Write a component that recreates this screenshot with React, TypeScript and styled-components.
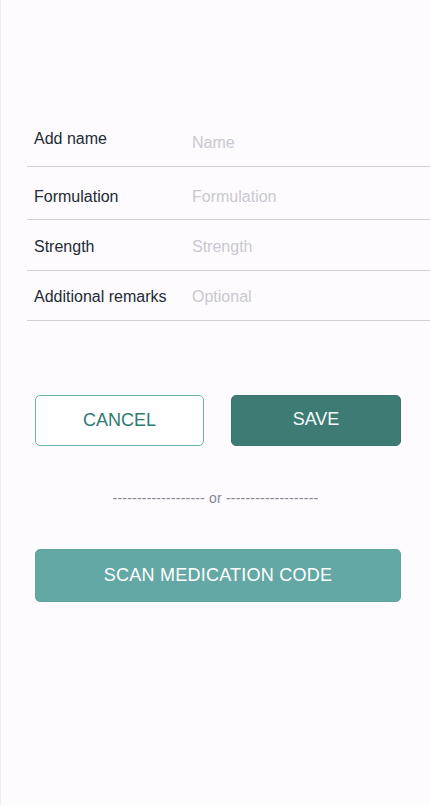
import styled, { createGlobalStyle } from "styled-components";

const GlobalStyle = createGlobalStyle`
  html, body {
    margin: 0;
    padding: 0;
    background: #fdfbfd;
  }
  body {
    font-family: "Liberation Sans", Arial, sans-serif;
  }
`;

// shift = vertical nudge of the whole row content, inputShift = extra nudge for the input
const fields = [
  { label: "Add name", placeholder: "Name", height: 54, shift: -1, inputShift: 4 },
  { label: "Formulation", placeholder: "Formulation", height: 53, shift: 4, inputShift: 0 },
  { label: "Strength", placeholder: "Strength", height: 51, shift: 2, inputShift: 0 },
  { label: "Additional remarks", placeholder: "Optional", height: 50, shift: 1, inputShift: 0 },
];

const AddMedication = () => {
  return (
    <Screen>
      <GlobalStyle />
      <Form>
        {fields.map((f) => (
          <FieldRow key={f.label} $height={f.height} $shift={f.shift}>
            <Label>{f.label}</Label>
            <Input placeholder={f.placeholder} $shift={f.inputShift} />
          </FieldRow>
        ))}
      </Form>

      <ButtonRow>
        <OutlineButton>CANCEL</OutlineButton>
        <SolidButton>SAVE</SolidButton>
      </ButtonRow>

      <Divider>------------------- or -------------------</Divider>

      <ScanButton>SCAN MEDICATION CODE</ScanButton>
    </Screen>
  );
};

export default AddMedication;

const Screen = styled.div`
  box-sizing: border-box;
  width: 430px;
  min-height: 805px;
  border-left: 1px solid #ececef;
  background: #fdfbfd;
  padding-top: 113px;
  display: flex;
  flex-direction: column;
`;

const Form = styled.div`
  margin-left: 26px;
  display: flex;
  flex-direction: column;
`;

const FieldRow = styled.label<{ $height: number; $shift: number }>`
  box-sizing: border-box;
  height: ${(p) => p.$height}px;
  border-bottom: 1px solid #cfcfd8;
  display: flex;
  align-items: center;
  padding-left: 7px;
  padding-top: ${(p) => Math.max(p.$shift, 0) * 2}px;
  padding-bottom: ${(p) => Math.max(-p.$shift, 0) * 2}px;
`;

const Label = styled.span`
  width: 158px;
  flex-shrink: 0;
  font-size: 16px;
  color: #232a36;
`;

const Input = styled.input<{ $shift: number }>`
  flex: 1;
  min-width: 0;
  border: none;
  outline: none;
  background: transparent;
  padding: 0;
  margin-top: ${(p) => p.$shift * 2}px;
  font-family: "Liberation Sans", Arial, sans-serif;
  font-size: 16px;
  color: #232a36;

  &::placeholder {
    color: #c9c8d2;
  }
`;

const ButtonRow = styled.div`
  margin: 74px 30px 0 34px;
  display: grid;
  grid-template-columns: 169px 170px;
  column-gap: 27px;
`;

const BaseButton = styled.button`
  box-sizing: border-box;
  height: 51px;
  border-radius: 5px;
  font-family: "Liberation Sans", Arial, sans-serif;
  font-size: 18px;
  cursor: pointer;
`;

const OutlineButton = styled(BaseButton)`
  background: #ffffff;
  border: 1px solid #66b2af;
  color: #2e7a72;
`;

const SolidButton = styled(BaseButton)`
  background: #3d7b74;
  border: 1px solid #3a766f;
  color: #f4fbfa;
  padding-bottom: 3px;
`;

const Divider = styled.div`
  margin-top: 44px;
  text-align: center;
  font-size: 14px;
  letter-spacing: 0.2px;
  color: #858597;
`;

const ScanButton = styled(BaseButton)`
  margin: 43px 29px 0 34px;
  height: 53px;
  background: #64a8a5;
  border: 1px solid #61a5a2;
  color: #ffffff;
  letter-spacing: 0.25px;
`;
